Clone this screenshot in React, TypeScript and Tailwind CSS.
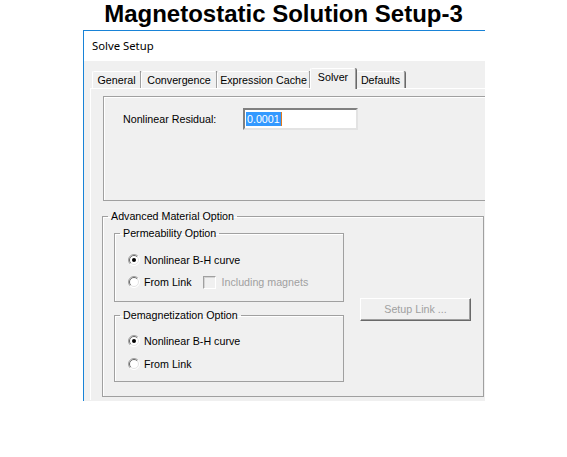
import React from "react";

const ui = { fontFamily: '"Liberation Sans", Arial, sans-serif' };

function Radio({ checked }: { checked?: boolean }) {
  return (
    <svg width="12" height="12" viewBox="0 0 12 12" className="shrink-0">
      <circle cx="6" cy="6" r="5.5" fill="#fff" />
      <path d="M2.1 9.9 A5.5 5.5 0 0 1 9.9 2.1" stroke="#a0a0a0" fill="none" />
      <path d="M9.9 2.1 A5.5 5.5 0 0 1 2.1 9.9" stroke="#ffffff" fill="none" />
      <path d="M2.8 9.2 A4.5 4.5 0 0 1 9.2 2.8" stroke="#696969" fill="none" />
      <path d="M9.2 2.8 A4.5 4.5 0 0 1 2.8 9.2" stroke="#e3e3e3" fill="none" />
      {checked && <circle cx="6" cy="6" r="2" fill="#000" />}
    </svg>
  );
}

function Tab({ label, width, active }: { label: string; width: string; active?: boolean }) {
  return (
    <div
      className={`${width} ${
        active ? "h-[21px] mb-[-1px] relative z-10 pb-[3px]" : "h-[17px]"
      } flex items-center justify-center bg-[#f0f0f0] border-l border-t border-white border-r border-r-[#a0a0a0] rounded-t-[2px] shadow-[1px_0_0_#696969] text-black`}
    >
      {label}
    </div>
  );
}

function Group({ label, height, className, children }: { label: string; height: string; className?: string; children: React.ReactNode }) {
  return (
    <fieldset className={`${height} ${className ?? ""} border border-[#a0a0a0] shadow-[inset_1px_1px_0_#fff]`}>
      <legend className="ml-[5px] px-[3px] leading-[13px]">{label}</legend>
      {children}
    </fieldset>
  );
}

export default function App() {
  return (
    <div className="w-[567px] h-[457px] bg-white overflow-hidden text-[10.7px] text-black" style={ui}>
      <h1 className="h-[30px] text-center font-bold text-[24px] leading-[27px]">
        Magnetostatic Solution Setup-3
      </h1>

      <div className="ml-[83px] w-[402px] h-[371px] border-l border-t border-[#1883d7] overflow-hidden flex flex-col">
        {/* title bar */}
        <div
          className="h-[30px] shrink-0 bg-white flex items-center pl-[8px] text-[11.3px]"
          style={{ fontFamily: '"Noto Sans", "Open Sans", sans-serif' }}
        >
          Solve Setup
        </div>

        <div className="flex-1 bg-[#f0f0f0] flex flex-col">
          {/* tabs */}
          <div className="mt-[7px] ml-[8px] h-[20px] flex items-end">
            <Tab label="General" width="w-[49px]" />
            <Tab label="Convergence" width="w-[76px]" />
            <Tab label="Expression Cache" width="w-[93px]" />
            <Tab label="Solver" width="w-[46px]" active />
            <Tab label="Defaults" width="w-[49px]" />
          </div>

          {/* tab page */}
          <div className="ml-[6px] mb-[1px] flex-1 w-[420px] border-l border-t border-white">
            <div className="ml-[12px] mt-[7px] h-[105px] w-[420px] border border-[#a0a0a0] shadow-[inset_1px_1px_0_#fff] flex items-start pt-[11px] pl-[19px]">
              <div className="w-[120px] h-[22px] flex items-center">Nonlinear Residual:</div>
              <div className="w-[115px] h-[22px] bg-white border-2 border-t-[#808080] border-l-[#808080] border-r-[#e3e3e3] border-b-[#e3e3e3] flex items-center pl-[1px]">
                <span className="bg-[#3399ff] text-white leading-[14px] px-[1px]">0.0001</span>
                <span className="w-[1px] h-[14px] bg-[#e07a1f]" />
              </div>
            </div>

            <Group label="Advanced Material Option" height="h-[187px]" className="ml-[11px] mt-[9px] w-[382px]">
              <div className="flex">
                <div className="ml-[11px] w-[230px] flex flex-col">
                  <Group label="Permeability Option" height="h-[75px]" className="mt-[4px] w-[230px]">
                    <div className="mt-[10px] pl-[13px] flex flex-col gap-[2px]">
                      <div className="h-[20px] flex items-center gap-[4px]">
                        <Radio checked />
                        <span>Nonlinear B-H curve</span>
                      </div>
                      <div className="h-[20px] flex items-center gap-[4px]">
                        <Radio />
                        <span>From Link</span>
                        <div className="ml-[7px] w-[13px] h-[13px] bg-[#f0f0f0] border border-t-[#a0a0a0] border-l-[#a0a0a0] border-r-white border-b-white shadow-[inset_1px_1px_0_#d4d4d4]" />
                        <span className="ml-[2px] text-[#a0a0a0]">Including magnets</span>
                      </div>
                    </div>
                  </Group>

                  <Group label="Demagnetization Option" height="h-[73px]" className="mt-[7px] w-[230px]">
                    <div className="mt-[9px] pl-[13px] flex flex-col gap-[3px]">
                      <div className="h-[20px] flex items-center gap-[4px]">
                        <Radio checked />
                        <span>Nonlinear B-H curve</span>
                      </div>
                      <div className="h-[20px] flex items-center gap-[4px]">
                        <Radio />
                        <span>From Link</span>
                      </div>
                    </div>
                  </Group>
                </div>

                <button
                  disabled
                  className="ml-[16px] mt-[75px] w-[111px] h-[23px] bg-[#f0f0f0] border border-t-white border-l-white border-r-[#696969] border-b-[#696969] shadow-[inset_-1px_-1px_0_#a0a0a0] text-[#a0a0a0] flex items-center justify-center"
                >
                  Setup Link ...
                </button>
              </div>
            </Group>
          </div>
        </div>
      </div>
    </div>
  );
}
